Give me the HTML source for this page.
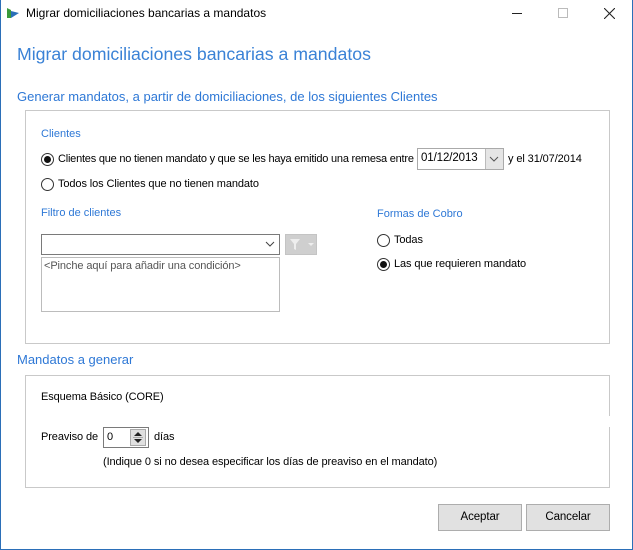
<!DOCTYPE html>
<html><head><meta charset="utf-8"><style>
*{margin:0;padding:0;box-sizing:border-box}
body{width:633px;height:550px;background:#fff;position:relative;overflow:hidden;font-family:"Liberation Sans",sans-serif;font-size:11px;color:#000;letter-spacing:-0.1px}
.a{position:absolute;white-space:nowrap}
.win{position:absolute;left:0;top:0;width:633px;height:550px;border:1px solid #2b6fb8;border-top:none}
.blue{color:#2e78d6;letter-spacing:0}
.h{font-size:13px;color:#2e78d6;letter-spacing:0}
.grp{position:absolute;border:1px solid #c9c9c9}
.radio{position:absolute;width:13px;height:13px;border:1px solid #333;border-radius:50%;background:#fff}
.radio.on::after{content:"";position:absolute;left:2px;top:2px;width:7px;height:7px;border-radius:50%;background:#111}
.btn{position:absolute;background:#e1e1e1;border:1px solid #adadad;text-align:center;line-height:25px;font-size:11.5px}
</style></head><body>
<div class="win"></div>
<svg class="a" style="left:6px;top:7px" width="14" height="12" viewBox="0 0 14 12"><path d="M1 1 L5 3 L5 11 L1 11Z" fill="#3a9a3a"/><path d="M5 4 L13 6 L5 11Z" fill="#2a6fb8"/></svg>
<div class="a" style="left:26px;top:6px;font-size:12px;letter-spacing:0">Migrar domiciliaciones bancarias a mandatos</div>
<div class="a" style="left:512px;top:13px;width:10px;height:1px;background:#222"></div>
<div class="a" style="left:558px;top:8px;width:10px;height:10px;border:1px solid #bbb"></div>
<svg class="a" style="left:604px;top:8px" width="11" height="11"><path d="M0 0L11 11M11 0L0 11" stroke="#222" stroke-width="1.1"/></svg>

<div class="a" style="left:17px;top:44px;font-size:17.7px;color:#3a82d6;letter-spacing:0">Migrar domiciliaciones bancarias a mandatos</div>
<div class="a h" style="left:17px;top:89px">Generar mandatos, a partir de domiciliaciones, de los siguientes Clientes</div>

<div class="grp" style="left:25px;top:110px;width:585px;height:234px"></div>
<div class="a blue" style="left:41px;top:128px">Clientes</div>
<div class="radio on" style="left:41px;top:153px"></div>
<div class="a" style="left:58px;top:153px;letter-spacing:-0.22px">Clientes que no tienen mandato y que se les haya emitido una remesa entre</div>
<div class="a" style="left:417px;top:148px;width:87px;height:22px;border:1px solid #aaa;background:#fff"></div>
<div class="a" style="left:421px;top:152px;font-size:11.5px">01/12/2013</div>
<div class="a" style="left:485px;top:149px;width:18px;height:20px;background:#e5e5e5;border-left:1px solid #bbb"></div>
<svg class="a" style="left:489px;top:156px" width="10" height="6"><path d="M1 1L5 5L9 1" fill="none" stroke="#555"/></svg>
<div class="a" style="left:508px;top:153px">y el 31/07/2014</div>
<div class="radio" style="left:41px;top:178px"></div>
<div class="a" style="left:58px;top:178px">Todos los Clientes que no tienen mandato</div>

<div class="a blue" style="left:41px;top:207px">Filtro de clientes</div>
<div class="a" style="left:41px;top:234px;width:239px;height:21px;border:1px solid #7a7a7a"></div>
<svg class="a" style="left:265px;top:241px" width="10" height="6"><path d="M1 1L5 5L9 1" fill="none" stroke="#444"/></svg>
<div class="a" style="left:285px;top:234px;width:32px;height:21px;background:#cfcfcf;border:1px solid #c4c4c4"></div>
<svg class="a" style="left:289px;top:238px" width="26" height="13"><path d="M1 1H11L7 6V12L5 11V6Z" fill="#eee"/><path d="M19 5H25L22 8Z" fill="#eee"/></svg>
<div class="a" style="left:41px;top:257px;width:239px;height:55px;border:1px solid #bcbcbc"></div>
<div class="a" style="left:44px;top:260px;color:#555">&lt;Pinche aquí para añadir una condición&gt;</div>

<div class="a blue" style="left:377px;top:208px">Formas de Cobro</div>
<div class="radio" style="left:377px;top:234px"></div>
<div class="a" style="left:394px;top:234px">Todas</div>
<div class="radio on" style="left:377px;top:258px"></div>
<div class="a" style="left:394px;top:258px">Las que requieren mandato</div>

<div class="a h" style="left:17px;top:352px">Mandatos a generar</div>
<div class="grp" style="left:25px;top:375px;width:585px;height:113px;border-right:none"></div>
<div class="a" style="left:609px;top:375px;width:1px;height:41px;background:#c9c9c9"></div>
<div class="a" style="left:609px;top:427px;width:1px;height:61px;background:#c9c9c9"></div>
<div class="a" style="left:41px;top:391px">Esquema Básico (CORE)</div>
<div class="a" style="left:41px;top:431px">Preaviso de</div>
<div class="a" style="left:103px;top:427px;width:46px;height:21px;border:1px solid #7a7a7a"></div>
<div class="a" style="left:107px;top:431px">0</div>
<div class="a" style="left:130px;top:429px;width:16px;height:17px;background:#e0e0e0;border:1px solid #aaa"></div>
<svg class="a" style="left:133px;top:430px" width="10" height="15"><path d="M1 6L5 2L9 6Z M1 9L5 13L9 9Z" fill="#222"/><path d="M0 7.5H10" stroke="#aaa"/></svg>
<div class="a" style="left:154px;top:431px">días</div>
<div class="a" style="left:103px;top:456px">(Indique 0 si no desea especificar los días de preaviso en el mandato)</div>

<div class="btn" style="left:438px;top:504px;width:84px;height:27px">Aceptar</div>
<div class="btn" style="left:526px;top:504px;width:84px;height:27px">Cancelar</div>
</body></html>
